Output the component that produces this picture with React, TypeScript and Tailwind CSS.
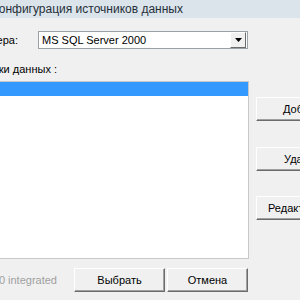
// Win classic raised button
function ClassicButton({ label, className = '' }: { label: string; className?: string }) {
  return (
    <div
      className={`flex items-center justify-center h-[24px] bg-[#f0f0f0] border-t border-l border-t-white border-l-white border-b border-r border-b-[#6b6b6b] border-r-[#6b6b6b] shadow-[inset_-1px_-1px_0_#a0a0a0] text-[11px] text-black whitespace-nowrap overflow-hidden ${className}`}
    >
      {label}
    </div>
  );
}

// right-aligned clipped label (dialog continues off the left edge)
function ClipLabel({ text, width, className = '' }: { text: string; width: number; className?: string }) {
  return (
    <div className={`flex justify-end overflow-hidden whitespace-nowrap shrink-0 ${className}`} style={{ width }}>
      <span>{text}</span>
    </div>
  );
}

export default function App() {
  return (
    <div
      className="w-[300px] h-[300px] overflow-hidden bg-[#f0f0f0] text-black font-['Liberation_Sans',Arial,sans-serif]"
    >
      {/* Title bar */}
      <div className="h-[18px] bg-[#dbe3eb] flex items-center">
        <ClipLabel text="Конфигурация источников данных" width={183} className="text-[12px] text-[#26303a]" />
      </div>

      {/* Server type */}
      <div className="flex items-center mt-[13px] text-[11px]">
        <ClipLabel text="Тип сервера:" width={18} />
        <div className="ml-[20px] w-[210px] h-[18px] border border-[#9aa1a9] bg-white flex items-center">
          <span className="pl-[3px] flex-1 pt-px">MS SQL Server 2000</span>
          <div className="w-[16px] h-[16px] mr-px bg-[#f0f0f0] border border-t-white border-l-white border-b-[#6b6b6b] border-r-[#6b6b6b] flex items-center justify-center">
            <svg width="7" height="4" viewBox="0 0 7 4">
              <path d="M0 0h7L3.5 4z" fill="#000" />
            </svg>
          </div>
        </div>
      </div>

      {/* Sources label */}
      <div className="mt-[14px] text-[11px] leading-[13px]">
        <ClipLabel text="Источники данных :" width={57} />
      </div>

      {/* List + side buttons */}
      <div className="flex mt-[5px]">
        <div className="w-[249px] h-[178px] bg-white border-t border-r border-b border-[#c8c8c8] shrink-0">
          <div className="h-[14px] bg-[#3399ff]" />
        </div>
        <div className="flex flex-col ml-[7px] w-[60px] shrink-0">
          <ClassicButton label="Добавить" className="mt-[16px] w-[80px] justify-start pl-[26px]" />
          <ClassicButton label="Удалить" className="mt-[26px] w-[80px] justify-start pl-[27px]" />
          <ClassicButton label="Редактировать" className="mt-[25px] w-[80px] justify-start pl-[11px]" />
        </div>
      </div>

      {/* Bottom row */}
      <div className="flex items-center mt-[9px] text-[11px]">
        <ClipLabel text="ODBC 3.0 integrated" width={57} className="text-[#a0a0a0]" />
        <ClassicButton label="Выбрать" className="ml-[17px] w-[91px]" />
        <ClassicButton label="Отмена" className="ml-[2px] w-[81px]" />
      </div>
    </div>
  );
}
